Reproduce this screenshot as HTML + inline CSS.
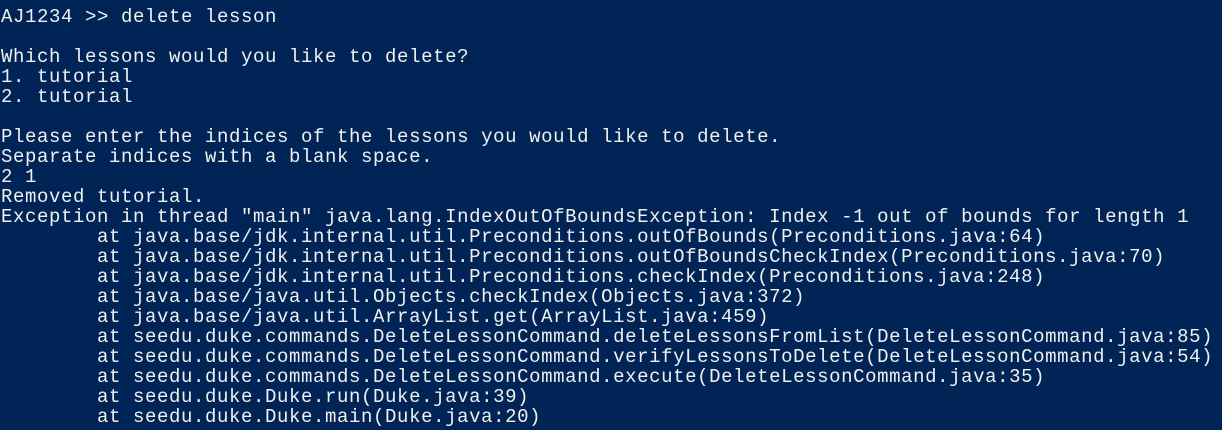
<!DOCTYPE html>
<html><head><style>
html,body{margin:0;padding:0;background:#012456;width:1222px;height:430px;overflow:hidden}
pre{margin:0;padding:7px 0 0 1px;color:#f0f0f0;font-family:"Liberation Mono",monospace;font-size:19px;letter-spacing:0.6px;line-height:20px;tab-size:8;white-space:pre}
</style></head><body><pre>AJ1234 &gt;&gt; delete lesson

Which lessons would you like to delete?
1. tutorial
2. tutorial

Please enter the indices of the lessons you would like to delete.
Separate indices with a blank space.
2 1
Removed tutorial.
Exception in thread "main" java.lang.IndexOutOfBoundsException: Index -1 out of bounds for length 1
        at java.base/jdk.internal.util.Preconditions.outOfBounds(Preconditions.java:64)
        at java.base/jdk.internal.util.Preconditions.outOfBoundsCheckIndex(Preconditions.java:70)
        at java.base/jdk.internal.util.Preconditions.checkIndex(Preconditions.java:248)
        at java.base/java.util.Objects.checkIndex(Objects.java:372)
        at java.base/java.util.ArrayList.get(ArrayList.java:459)
        at seedu.duke.commands.DeleteLessonCommand.deleteLessonsFromList(DeleteLessonCommand.java:85)
        at seedu.duke.commands.DeleteLessonCommand.verifyLessonsToDelete(DeleteLessonCommand.java:54)
        at seedu.duke.commands.DeleteLessonCommand.execute(DeleteLessonCommand.java:35)
        at seedu.duke.Duke.run(Duke.java:39)
        at seedu.duke.Duke.main(Duke.java:20)
</pre></body></html>
